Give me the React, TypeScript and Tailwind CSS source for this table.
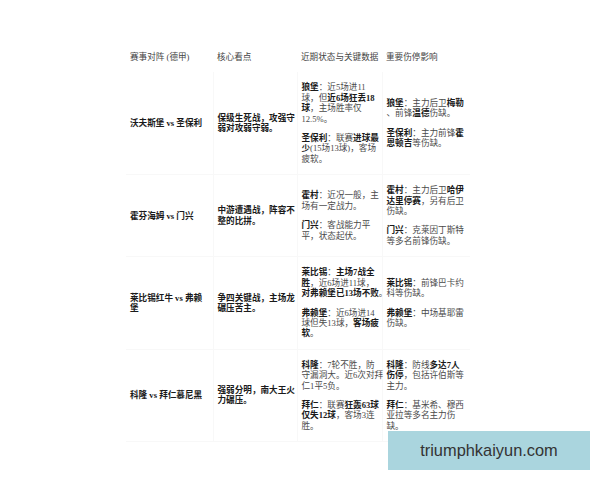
import React from "react";

type Cell = React.ReactNode;

function B({ children }: { children: React.ReactNode }) {
  return <b className="font-bold text-[#1a1a1a]">{children}</b>;
}

const rows: { match: Cell; focus: Cell; form: Cell[]; injuries: Cell[] }[] = [
  {
    match: <>沃夫斯堡 vs 圣保利</>,
    focus: (
      <>
        保级生死战，攻强守
        <br />
        弱对攻弱守弱。
      </>
    ),
    form: [
      <>
        <B>狼堡</B>：近5场进11
        <br />
        球，但<B>近6场狂丢18</B>
        <br />
        <B>球</B>，主场胜率仅
        <br />
        12.5%。
      </>,
      <>
        <B>圣保利</B>：联赛<B>进球最</B>
        <br />
        <B>少</B>(15场13球)，客场
        <br />
        疲软。
      </>,
    ],
    injuries: [
      <>
        <B>狼堡</B>：主力后卫<B>梅勒</B>
        <br />
        、前锋<B>温德</B>伤缺。
      </>,
      <>
        <B>圣保利</B>：主力前锋<B>霍</B>
        <br />
        <B>恩顿吉</B>等伤缺。
      </>,
    ],
  },
  {
    match: <>霍芬海姆 vs 门兴</>,
    focus: (
      <>
        中游遭遇战，阵容不
        <br />
        整的比拼。
      </>
    ),
    form: [
      <>
        <B>霍村</B>：近况一般，主
        <br />
        场有一定战力。
      </>,
      <>
        <B>门兴</B>：客战能力平
        <br />
        平，状态起伏。
      </>,
    ],
    injuries: [
      <>
        <B>霍村</B>：主力后卫<B>哈伊</B>
        <br />
        <B>达里停赛</B>，另有后卫
        <br />
        伤缺。
      </>,
      <>
        <B>门兴</B>：克莱因丁斯特
        <br />
        等多名前锋伤缺。
      </>,
    ],
  },
  {
    match: (
      <>
        莱比锡红牛 vs 弗赖
        <br />堡
      </>
    ),
    focus: (
      <>
        争四关键战，主场龙
        <br />
        碾压苦主。
      </>
    ),
    form: [
      <>
        <B>莱比锡</B>：<B>主场7战全</B>
        <br />
        <B>胜</B>，近6场进11球，
        <br />
        <B>对弗赖堡已13场不败</B>。
      </>,
      <>
        <B>弗赖堡</B>：近6场进14
        <br />
        球但失13球，<B>客场疲</B>
        <br />
        <B>软</B>。
      </>,
    ],
    injuries: [
      <>
        <B>莱比锡</B>：前锋巴卡约
        <br />
        科等伤缺。
      </>,
      <>
        <B>弗赖堡</B>：中场基耶雷
        <br />
        伤缺。
      </>,
    ],
  },
  {
    match: <>科隆 vs 拜仁慕尼黑</>,
    focus: (
      <>
        强弱分明，南大王火
        <br />
        力碾压。
      </>
    ),
    form: [
      <>
        <B>科隆</B>：7轮不胜，防
        <br />
        守漏洞大。近6次对拜
        <br />
        仁1平5负。
      </>,
      <>
        <B>拜仁</B>：联赛<B>狂轰63球</B>
        <br />
        <B>仅失12球</B>，客场3连
        <br />
        胜。
      </>,
    ],
    injuries: [
      <>
        <B>科隆</B>：防线<B>多达7人</B>
        <br />
        <B>伤停</B>，包括许伯斯等
        <br />
        主力。
      </>,
      <>
        <B>拜仁</B>：基米希、穆西
        <br />
        亚拉等多名主力伤
        <br />
        缺。
      </>,
    ],
  },
];

function Paras({ items }: { items: Cell[] }) {
  return (
    <div className="flex flex-col gap-[9px]">
      {items.map((p, i) => (
        <p key={i}>{p}</p>
      ))}
    </div>
  );
}

export default function App() {
  return (
    <div
      className="relative w-[600px] h-[480px] bg-white text-[8.6px] leading-[10.4px] text-[#4a4a4a]"
      style={{ fontFamily: '"Liberation Serif", "Noto Sans CJK SC", serif' }}
    >
      <div className="pt-[42px]">
        <table className="table-fixed border-collapse w-[344px] ml-[126px] whitespace-nowrap">
          <colgroup>
            <col className="w-[87px]" />
            <col className="w-[84px]" />
            <col className="w-[85px]" />
            <col className="w-[88px]" />
          </colgroup>
          <thead>
            <tr className="text-left text-[#444]">
              <th className="font-normal px-[4px] py-[10px]">赛事对阵 (德甲)</th>
              <th className="font-normal px-[4px] py-[10px]">核心看点</th>
              <th className="font-normal px-[4px] py-[10px]">近期状态与关键数据</th>
              <th className="font-normal px-[4px] py-[10px]">重要伤停影响</th>
            </tr>
          </thead>
          <tbody>
            {rows.map((r, i) => (
              <tr key={i} className="align-middle">
                <td className="px-[4px] py-[10px] border-b border-r border-[#f8f8f8] font-bold text-[#1a1a1a]">
                  {r.match}
                </td>
                <td className="px-[4px] py-[10px] border-b border-r border-[#f8f8f8] font-bold text-[#1a1a1a]">
                  {r.focus}
                </td>
                <td className="px-[4px] py-[10px] border-b border-r border-[#f8f8f8]">
                  <Paras items={r.form} />
                </td>
                <td className="px-[4px] py-[10px] border-b border-[#f8f8f8]">
                  <Paras items={r.injuries} />
                </td>
              </tr>
            ))}
          </tbody>
        </table>
      </div>
      <div
        className="absolute left-[388px] top-[431px] w-[202px] h-[39px] bg-[#aad5de] flex items-center justify-center text-[16.4px] text-[#333]"
        style={{ fontFamily: '"Liberation Sans", Arial, sans-serif' }}
      >
        triumphkaiyun.com
      </div>
    </div>
  );
}
